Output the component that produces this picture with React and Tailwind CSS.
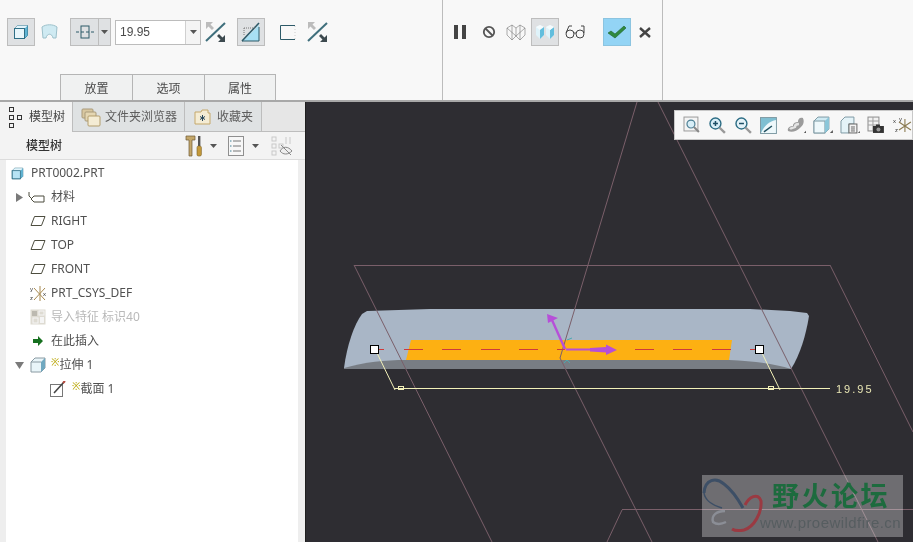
const CJK = "font-['Noto_Sans','Noto_Sans_CJK_SC',sans-serif]";

const ShadedCube = ({ className = "", front = "#e8f6fb" }) => (
  <svg viewBox="0 0 16 16" className={className}>
    <path d="M1.5 4.5 L4.5 1.5 H14.5 L14.5 11.5 L11.5 14.5 H1.5 Z" fill="#bfe6f5" stroke="#2f6f86" strokeWidth="1" />
    <path d="M11.5 14.5 V4.5 L14.5 1.5 V11.5 Z" fill="#5fb4d4" />
    <path d="M1.5 4.5 H11.5 L14.5 1.5 H4.5 Z" fill="#e2f4fb" />
    <rect x="1.5" y="4.5" width="10" height="10" fill={front} stroke="#2f6f86" strokeWidth="1" />
  </svg>
);

const FlipArrows = () => (
  <svg width="22" height="24" viewBox="0 0 22 24">
    <path d="M1 21 L20 3" stroke="#3f6f7c" strokeWidth="2" />
    <path d="M1 2 L8 2 L5.5 4.5 L9 8 L7 10 L3.5 6.5 L1 9 Z" fill="#bcbcbc" />
    <path d="M20 22 L13 22 L15.5 19.5 L12 16 L14 14 L17.5 17.5 L20 15 Z" fill="#3d4a4f" />
  </svg>
);

const Caret = ({ color = "#555" }) => (
  <svg width="7" height="4" viewBox="0 0 7 4"><path d="M0 0 H7 L3.5 4 Z" fill={color} /></svg>
);

const PlaneIcon = () => (
  <svg width="16" height="12" viewBox="0 0 16 12">
    <path d="M4.5 1.5 H15 L11.5 10.5 H1 Z" fill="none" stroke="#4d4d3f" strokeWidth="1" />
  </svg>
);

const TreeRow = ({ pad, icon, caret, children, className = "text-[#505050]" }) => (
  <div className={`flex h-6 items-center ${className}`} style={{ paddingLeft: pad }}>
    {caret}
    {icon}
    {children}
  </div>
);

const NewMark = () => <span className="mb-[6px] text-[10px] leading-none text-[#b8a400]">※</span>;

const RibbonTab = ({ label }) => (
  <div className="flex h-[26px] w-[72px] items-center justify-center border-l border-t border-[#b5b5b5] bg-[#f0f1f1] pt-[3px] text-[12px] text-[#4a4a4a] last:border-r">
    {label}
  </div>
);

const ViewIcons = () => (
  <div className="absolute right-0 top-[8px] flex h-[30px] w-[239px] items-center gap-[7px] border border-[#c8c8c8] bg-[#f7f7f7] pl-[8px]">
    <svg width="18" height="18" viewBox="0 0 18 18">
      <rect x="1" y="1" width="14" height="14" fill="#f4f4f4" stroke="#9a9a9a" />
      <circle cx="8" cy="8" r="4" fill="#d8eef7" stroke="#4d7f94" strokeWidth="1.2" />
      <path d="M11 11 L16 16" stroke="#888" strokeWidth="2" />
    </svg>
    <svg width="19" height="19" viewBox="0 0 19 19">
      <circle cx="7.5" cy="7.5" r="5.5" fill="#d8eef7" stroke="#2b6c84" strokeWidth="1.4" />
      <path d="M5 7.5 H10 M7.5 5 V10" stroke="#1d4f66" strokeWidth="1.5" />
      <path d="M11.5 11.5 L17 17" stroke="#999" strokeWidth="2.4" />
    </svg>
    <svg width="19" height="19" viewBox="0 0 19 19">
      <circle cx="7.5" cy="7.5" r="5.5" fill="#e4f2f8" stroke="#2b6c84" strokeWidth="1.4" />
      <path d="M5 7.5 H10" stroke="#1d4f66" strokeWidth="1.5" />
      <path d="M11.5 11.5 L17 17" stroke="#999" strokeWidth="2.4" />
    </svg>
    <svg width="17" height="17" viewBox="0 0 17 17">
      <rect x="0.5" y="0.5" width="16" height="16" fill="#7fbfd2" stroke="#7f9aa4" />
      <path d="M1 16 H16 V3 C10 4 4 9 1 16 Z" fill="#eef8fb" />
      <path d="M4 15 L12 9" stroke="#1f4f5f" strokeWidth="1.5" />
    </svg>
    <svg width="21" height="18" viewBox="0 0 21 18" className="ml-[2px]">
      <path d="M2 15 C1 11 5 10 7 10 C7 7 10 6 12 6 C12 3 14 1 17 2 C19 6 17 10 14 12 C11 15 6 17 2 15 Z" fill="#9b9b9b" />
      <path d="M4 13 C5 12 7 12 9 11 C9 9 11 8 13 8" stroke="#e4e4e4" strokeWidth="2.4" fill="none" />
      <path d="M18 17 H21 V14 Z" fill="#555" />
    </svg>
    <svg width="20" height="18" viewBox="0 0 20 18">
      <path d="M1 5 L5 1 H16 V13 L12 17 H1 Z" fill="#cfeaf3" stroke="#7f9aa4" />
      <rect x="1" y="5" width="11" height="12" fill="#eef8fb" stroke="#7f9aa4" />
      <path d="M12 17 V5 L16 1 V13 Z" fill="#8ac6d9" />
      <path d="M17 17 H20 V14 Z" fill="#555" />
    </svg>
    <svg width="20" height="18" viewBox="0 0 20 18">
      <path d="M1 5 L5 1 H14 V8 H9 V17 H1 Z" fill="#e4f3f8" stroke="#7f9aa4" />
      <rect x="9" y="8" width="8" height="9" fill="#f4f4f4" stroke="#666" />
      <path d="M11 11 H15 M11 13 H15 M11 15 H15" stroke="#666" />
      <path d="M18 17 H20 V15 Z" fill="#555" />
    </svg>
    <svg width="18" height="18" viewBox="0 0 18 18">
      <rect x="1" y="1" width="11" height="14" fill="#f2f2f2" stroke="#8c8c8c" />
      <path d="M1 5 H12 M1 9 H12 M6 1 V15" stroke="#a0a0a0" />
      <rect x="6" y="10" width="11" height="7" fill="#333" />
      <rect x="9" y="8.5" width="4" height="2" fill="#333" />
      <circle cx="11.5" cy="13.5" r="2" fill="#999" />
    </svg>
    <svg width="20" height="18" viewBox="0 0 20 18">
      <path d="M13 3 V16 M7 6 L19 14 M7 14 L19 6" stroke="#8a7a50" strokeWidth="1.1" />
      <text x="1" y="7" fontSize="6" fill="#333" fontFamily="Liberation Sans">x</text>
      <text x="7" y="5" fontSize="6" fill="#333" fontFamily="Liberation Sans">y</text>
      <text x="3" y="16" fontSize="6" fill="#333" fontFamily="Liberation Sans">z</text>
    </svg>
  </div>
);

const Viewport = () => (
  <div className="relative flex-1 overflow-hidden bg-[#2e2d32]">
    <svg viewBox="306 102 607 440" className="block h-[440px] w-[607px]">
      <path d="M367 311 L430 309 H750 L790 311 L807 313 L809 316 C806 335 800 355 791 369 L720 369 H400 L344 368 C347 345 354 325 362 314 Z" fill="#a9b6c6" />
      <path d="M344 368 C365 362 385 360 406 360 H729 C755 361 775 364 791 369 H344 Z" fill="#787d84" />
      <path d="M411 340 H732 L729 360 H406 Z" fill="#fdb012" />

      <g stroke="#7a5f6a" strokeWidth="1" fill="none">
        <path d="M354 265.5 H830" />
        <path d="M354 265 L492 542" />
        <path d="M637 102 L560 358 L652 542" />
        <path d="M658 102 L878 542" />
        <path d="M830 265 L913 432" />
        <path d="M622 509.5 H913" />
        <path d="M622 510 L607 542" />
      </g>

      <path d="M379 349.5 H384 M404 349.5 H423 M442 349.5 H461 M481 349.5 H500 M519 349.5 H538 M557 349.5 H565 M635 349.5 H654 M673 349.5 H692 M712 349.5 H731 M750 349.5 H755" stroke="#cf3a3a" strokeWidth="1" fill="none" />

      <path d="M377 353 L395 390 M762 353 L780 390" stroke="#f2f0b8" fill="none" />
      <path d="M394 388.5 H830" stroke="#f2f0b8" fill="none" />
      <rect x="398.5" y="386.5" width="5" height="3" fill="none" stroke="#f2f0b8" />
      <rect x="768.5" y="386.5" width="5" height="3" fill="none" stroke="#f2f0b8" />
      <text x="836" y="393" fontSize="11" letterSpacing="2" fill="#e9e6b4" fontFamily="Liberation Sans">19.95</text>

      <rect x="370.5" y="345.5" width="8" height="8" fill="#fff" stroke="#000" />
      <rect x="755.5" y="345.5" width="8" height="8" fill="#fff" stroke="#000" />

      <path d="M565 349 L552 320" stroke="#b64fd8" strokeWidth="2.4" fill="none" />
      <path d="M547 314 L558 318 L548 323 Z" fill="#b64fd8" />
      <path d="M566 349.5 H592" stroke="#b64fd8" strokeWidth="2" fill="none" />
      <path d="M590 348 L606 347 V344.5 L617 350 L606 355 V352.5 L590 351.5 Z" fill="#b64fd8" />
      <path d="M567 340 L572 338 M564 363 L567 360 L570 363" stroke="#4aa8b0" fill="none" />
    </svg>

    <ViewIcons />

    <div className="absolute bottom-[5px] right-[10px] h-[62px] w-[201px] bg-[#4e4e4e] mix-blend-screen" />
    <div className="absolute bottom-[5px] right-[10px] flex h-[62px] w-[201px] items-center">
      <svg width="62" height="62" viewBox="0 0 62 62" className="shrink-0">
        <path d="M2 18 C3 4 14 2 22 9 C30 15 36 24 41 33" stroke="#3d4f66" strokeWidth="3" fill="none" />
        <path d="M2 18 C3 25 10 30 20 33" stroke="#3d4f66" strokeWidth="1.5" fill="none" />
        <path d="M43 30 C47 22 56 17 59 26 C60 38 52 52 42 55 C37 56 33 56 30 54" stroke="#9a3a42" strokeWidth="3" fill="none" />
        <path d="M23 36 C15 36 9 40 11 47 C15 50 20 49 24 47" stroke="#8b8e96" strokeWidth="2.4" fill="none" />
      </svg>
      <div className="flex flex-col">
        <span className={`${CJK} ml-[8px] text-[27px] font-bold leading-[34px] tracking-[2.5px] text-[#1d6b3e]`}>野火论坛</span>
        <span className="-ml-[4px] font-['Liberation_Sans',sans-serif] text-[15px] leading-[20px] tracking-[0.45px] text-[#565d60]">www.proewildfire.cn</span>
      </div>
    </div>
  </div>
);

const ModelTree = () => (
  <div className={`${CJK} flex w-[306px] shrink-0 flex-col border-r border-[#1f1f1f] bg-[#eeeeee] text-[12px]`}>
    <div className="flex h-[30px] bg-[#e4e5e5]">
      <div className="flex w-[73px] items-center gap-[5px] border-r border-[#bdbdbd] bg-[#f3f3f3] pl-[8px] text-[#444]">
        <svg width="16" height="22" viewBox="0 0 16 22" className="shrink-0">
          <g fill="none" stroke="#333">
            <rect x="1.5" y="1.5" width="4" height="4" />
            <rect x="1.5" y="9.5" width="4" height="4" />
            <rect x="1.5" y="17.5" width="4" height="4" />
            <rect x="9.5" y="9.5" width="4" height="4" />
          </g>
        </svg>
        模型树
      </div>
      <div className="flex w-[112px] items-center gap-[4px] border-r border-b border-[#bdbdbd] bg-[#dfe2e3] pl-[8px] text-[#5d5d5d]">
        <svg width="20" height="20" viewBox="0 0 20 20" className="shrink-0">
          <rect x="1" y="2" width="11" height="9" rx="1" fill="#d8c7a0" stroke="#a99a7a" />
          <rect x="4" y="5" width="11" height="9" rx="1" fill="#e4d6b2" stroke="#a99a7a" />
          <rect x="7" y="9" width="12" height="10" rx="1" fill="#f4ecd4" stroke="#b39d6c" />
        </svg>
        文件夹浏览器
      </div>
      <div className="flex w-[77px] items-center gap-[6px] border-r border-b border-[#bdbdbd] bg-[#dfe2e3] pl-[9px] text-[#5d5d5d]">
        <svg width="17" height="16" viewBox="0 0 17 16" className="shrink-0">
          <path d="M1 3 H7 L8 1 H14 V4 H16 V15 H1 Z" fill="#f4ecd4" stroke="#c5a86a" />
          <path d="M8.5 6 V12 M6 7.5 L11 10.5 M11 7.5 L6 10.5" stroke="#27465a" />
        </svg>
        收藏夹
      </div>
      <div className="flex-1 border-b border-[#bdbdbd] bg-[#e6e6e6]" />
    </div>

    <div className="flex h-[28px] items-center border-b border-[#dcdcdc] bg-[#f3f3f3] pl-[26px] pr-[9px] font-medium text-[#333]">
      <span className="w-[159px]">模型树</span>
      <svg width="18" height="22" viewBox="0 0 18 22" className="shrink-0">
        <path d="M1 1 H10 V5 H7 V21 H4 V5 H1 Z" fill="#c4a76a" stroke="#6d5a33" strokeWidth="0.7" />
        <rect x="13" y="1" width="2.4" height="10" fill="#555" />
        <rect x="12" y="11" width="4.4" height="10" rx="1.5" fill="#c59a3a" stroke="#7a6026" strokeWidth="0.6" />
      </svg>
      <span className="ml-[7px] flex"><Caret /></span>
      <svg width="16" height="20" viewBox="0 0 16 20" className="ml-[11px] shrink-0">
        <rect x="0.5" y="0.5" width="15" height="19" fill="#f7f7f7" stroke="#8f8f8f" />
        <path d="M5 5 H13 M5 10 H13 M5 15 H13" stroke="#777" />
        <path d="M2 5 H3.5 M2 10 H3.5 M2 15 H3.5" stroke="#3f7f95" />
      </svg>
      <span className="ml-[8px] flex"><Caret /></span>
      <svg width="22" height="20" viewBox="0 0 22 20" className="ml-[12px] shrink-0">
        <g fill="none" stroke="#c9c9c9">
          <rect x="1" y="1" width="4" height="4" />
          <rect x="1" y="8" width="4" height="4" />
          <rect x="1" y="15" width="4" height="4" />
          <rect x="8" y="8" width="4" height="4" />
          <path d="M15 1 V8 M19 1 V8" />
        </g>
        <path d="M9 15 C12 10 17 10 21 15 C17 19 12 19 9 15 Z" fill="#eee" stroke="#888" />
        <path d="M10 9 L20 19" stroke="#888" />
      </svg>
    </div>

    <div className="ml-[6px] mr-[7px] flex-1 bg-white pt-px">
      <TreeRow
        pad={5}
        icon={<ShadedCube front="#b6e3f4" className="mr-[7px] h-[13px] w-[13px]" />}
      >
        PRT0002.PRT
      </TreeRow>
      <TreeRow
        pad={10}
        caret={<svg width="7" height="9" viewBox="0 0 7 9" className="mr-[5px]"><path d="M0 0 L7 4.5 L0 9 Z" fill="#7a7a7a" /></svg>}
        icon={
          <svg width="17" height="12" viewBox="0 0 17 12" className="mr-[6px]">
            <path d="M1 1 V5 L4 8 M6 5 H16 V11 H6 L3 8 Z" fill="none" stroke="#4d4d3f" />
          </svg>
        }
      >
        材料
      </TreeRow>
      {["RIGHT", "TOP", "FRONT"].map((name) => (
        <TreeRow key={name} pad={24} icon={<span className="mr-[5px] flex"><PlaneIcon /></span>}>
          {name}
        </TreeRow>
      ))}
      <TreeRow
        pad={24}
        icon={
          <svg width="17" height="17" viewBox="0 0 17 17" className="mr-[4px]">
            <path d="M10 1 V16 M4 3 L15 15 M4 15 L15 3" stroke="#a88a50" fill="none" />
            <text x="0" y="6" fontSize="6" fill="#333" fontFamily="Liberation Sans">y</text>
            <text x="0" y="15" fontSize="6" fill="#333" fontFamily="Liberation Sans">z</text>
            <text x="13" y="11" fontSize="6" fill="#333" fontFamily="Liberation Sans">x</text>
          </svg>
        }
      >
        PRT_CSYS_DEF
      </TreeRow>
      <TreeRow
        pad={24}
        className="text-[#b9b9b9]"
        icon={
          <svg width="16" height="16" viewBox="0 0 16 16" className="mr-[5px]">
            <rect x="0.5" y="0.5" width="15" height="15" fill="#dedbd2" />
            <rect x="2" y="2" width="5" height="5" fill="#bcb9b0" />
            <rect x="9" y="2" width="5" height="4" fill="none" stroke="#f5f5f5" />
            <rect x="3" y="9" width="5" height="5" fill="none" stroke="#f5f5f5" />
            <rect x="10" y="8" width="4" height="6" fill="#f5f5f5" />
          </svg>
        }
      >
        导入特征 标识40
      </TreeRow>
      <TreeRow
        pad={27}
        icon={
          <svg width="10" height="10" viewBox="0 0 10 10" className="mr-[8px]">
            <path d="M0 3 H5 V0 L10 5 L5 10 V7 H0 Z" fill="#16701f" />
          </svg>
        }
      >
        在此插入
      </TreeRow>
      <TreeRow
        pad={9}
        caret={<svg width="9" height="7" viewBox="0 0 9 7" className="mr-[6px]"><path d="M0 0 H9 L4.5 7 Z" fill="#7a7a7a" /></svg>}
        icon={
          <svg width="16" height="16" viewBox="0 0 16 16" className="mr-[4px]">
            <path d="M1 5 L5 1 H15 V11 L11 15 H1 Z" fill="#e9f5f9" stroke="#8a9aa2" />
            <path d="M11 15 V5 L15 1 V11 Z" fill="#6fa8c0" />
            <path d="M1 5 H11" stroke="#8a9aa2" />
          </svg>
        }
      >
        <span className="flex items-center pl-[1px]">
          <NewMark />
          <span>拉伸 1</span>
        </span>
      </TreeRow>
      <TreeRow
        pad={44}
        icon={
          <svg width="16" height="16" viewBox="0 0 16 16" className="mr-[4px]">
            <rect x="0.5" y="3.5" width="12" height="12" fill="#fff" stroke="#777" />
            <path d="M4 12 L14 1" stroke="#444" strokeWidth="1.6" />
            <path d="M13 2 L15 0" stroke="#b5473c" strokeWidth="2" />
          </svg>
        }
      >
        <span className="flex items-center pl-[2px]">
          <NewMark />
          <span>截面 1</span>
        </span>
      </TreeRow>
    </div>
  </div>
);

export default function App() {
  return (
    <div className={`${CJK} flex h-[542px] w-[913px] flex-col overflow-hidden bg-[#2e2d32]`}>
      <div className="flex h-[102px] shrink-0 border-b-2 border-[#a8a8a8] bg-[#f8f8f8]">
        <div className="flex w-[443px] shrink-0 flex-col border-r border-[#bcbcbc]">
          <div className="mt-[18px] flex h-[28px] items-center pl-[7px]">
            <div className="flex h-[28px] w-[28px] items-center justify-center border border-[#bdbdbd] bg-[#dfe1e3]">
              <ShadedCube className="h-[16px] w-[16px]" />
            </div>
            <svg width="17" height="16" viewBox="0 0 17 16" className="ml-[6px]">
              <path d="M1 3 C5 0 12 0 16 3 L15 14 H12 C11 9 6 9 5 14 H2 Z" fill="#cfeaf2" stroke="#9cc0ca" />
            </svg>
            <div className="ml-[12px] flex h-[28px] w-[41px] border border-[#bdbdbd] bg-[#dfe1e3]">
              <div className="flex w-[27px] items-center justify-center">
                <svg width="18" height="16" viewBox="0 0 18 16">
                  <rect x="5" y="2" width="8" height="12" fill="none" stroke="#2d5a68" />
                  <path d="M0 8 H18" stroke="#2d5a68" strokeDasharray="3 2" />
                </svg>
              </div>
              <div className="flex flex-1 items-center justify-center border-l border-[#bdbdbd]"><Caret /></div>
            </div>
            <div className="ml-[4px] flex h-[25px] w-[86px] border border-[#bcbcbc] bg-white font-['Liberation_Sans',sans-serif] text-[12px] text-[#4a4a4a]">
              <span className="flex-1 pl-[4px] leading-[23px]">19.95</span>
              <div className="flex w-[15px] items-center justify-center border-l border-[#d0d0d0] bg-[#f4f4f4]"><Caret /></div>
            </div>
            <span className="ml-[4px] flex"><FlipArrows /></span>
            <div className="ml-[10px] flex h-[28px] w-[28px] items-center justify-center border border-[#bdbdbd] bg-[#dfe1e3]">
              <svg width="20" height="20" viewBox="0 0 20 20">
                <path d="M2 19 L18 3 V19 Z" fill="#a8e0f4" />
                <path d="M1 19 H18 V5" fill="none" stroke="#2d5a68" />
                <path d="M1 19 L18 1" stroke="#2d5a68" strokeWidth="1.6" />
                <path d="M3 6 H14 M3 6 V14" stroke="#777" strokeDasharray="1 1" />
              </svg>
            </div>
            <svg width="16" height="15" viewBox="0 0 16 15" className="ml-[15px]">
              <path d="M15 0.5 H0.5 V14.5 H15" fill="none" stroke="#2d5a68" />
              <path d="M15 1 V14" stroke="#ccc" strokeDasharray="1 2" />
            </svg>
            <span className="ml-[11px] flex"><FlipArrows /></span>
          </div>
          <div className="mt-auto flex pl-[60px]">
            <RibbonTab label="放置" />
            <RibbonTab label="选项" />
            <RibbonTab label="属性" />
          </div>
        </div>

        <div className="flex w-[220px] shrink-0 border-r border-[#bcbcbc]">
          <div className="mt-[18px] flex h-[28px] items-center pl-[11px]">
            <div className="flex w-[12px] justify-between">
              <span className="h-[14px] w-[4px] bg-[#444]" />
              <span className="h-[14px] w-[4px] bg-[#444]" />
            </div>
            <svg width="14" height="14" viewBox="0 0 14 14" className="ml-[16px]">
              <circle cx="7" cy="7" r="5.2" fill="none" stroke="#555" strokeWidth="1.8" />
              <path d="M3.5 3.5 L10.5 10.5" stroke="#555" strokeWidth="1.8" />
            </svg>
            <svg width="20" height="17" viewBox="0 0 20 17" className="ml-[10px]">
              <g fill="none" stroke="#777" strokeWidth="0.6">
                <path d="M1 4 L6 1 L10 4 L14 1 L19 4 V11 L14 16 L10 12 L6 16 L1 11 Z" />
                <path d="M6 1 V16 M14 1 V16 M1 4 L10 12 L19 4 M10 4 V12" />
              </g>
            </svg>
            <div className="ml-[5px] flex h-[28px] w-[28px] items-center justify-center border border-[#bdbdbd] bg-[#dfe1e3]">
              <svg width="20" height="16" viewBox="0 0 20 16">
                <path d="M1 3 L5 1 L9 3 V11 L5 15 L1 11 Z" fill="#dff3fa" />
                <path d="M1 3 L5 6 L9 3 L5 1 Z" fill="#f5fbfd" />
                <path d="M5 6 V15 L9 11 V3 Z" fill="#62bedd" />
                <path d="M11 3 L15 1 L19 3 V11 L15 15 L11 11 Z" fill="#dff3fa" />
                <path d="M15 6 V15 L19 11 V3 Z" fill="#62bedd" />
                <path d="M11 3 L15 6 L19 3 L15 1 Z" fill="#f5fbfd" />
              </svg>
            </div>
            <svg width="20" height="14" viewBox="0 0 20 14" className="ml-[6px]">
              <g fill="none" stroke="#444" strokeWidth="1">
                <circle cx="5" cy="9" r="4" />
                <circle cx="15" cy="9" r="4" />
                <path d="M9 8 H11 M1 8 L4 1 H7 M19 8 V1 H16" />
              </g>
            </svg>
            <div className="ml-[18px] flex h-[28px] w-[28px] items-center justify-center border border-[#8cc4e0] bg-[#93d4f5]">
              <svg width="20" height="16" viewBox="0 0 20 16">
                <path d="M1 9 L4 7 L8 10 L17 2 L19 4 L8 14 Z" fill="#2f8a3f" stroke="#1f5f2c" strokeWidth="0.6" />
              </svg>
            </div>
            <svg width="12" height="11" viewBox="0 0 12 11" className="ml-[8px]">
              <path d="M1 1 L11 10 M11 1 L1 10" stroke="#444" strokeWidth="2.4" />
            </svg>
          </div>
        </div>
        <div className="flex-1" />
      </div>

      <div className="flex flex-1 overflow-hidden">
        <ModelTree />
        <Viewport />
      </div>
    </div>
  );
}
